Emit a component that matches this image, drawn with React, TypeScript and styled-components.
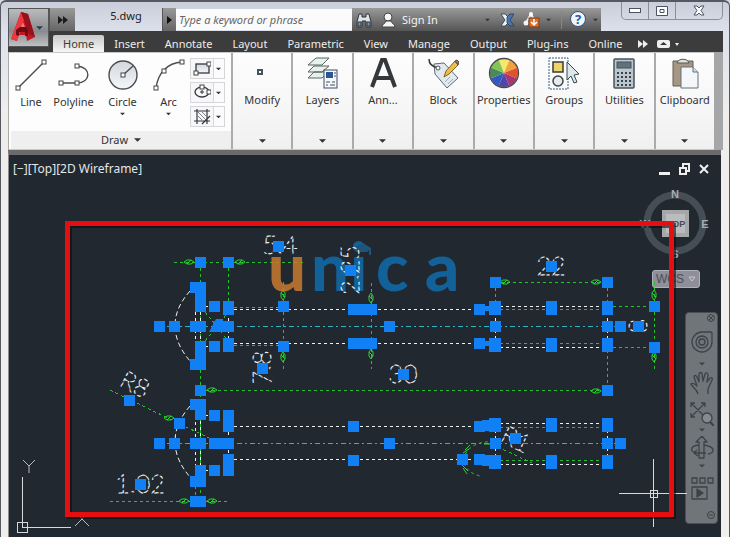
import React from "react";
import styled, { createGlobalStyle } from "styled-components";

const GlobalStyle = createGlobalStyle`
  * { box-sizing: border-box; }
  body { margin: 0; background: #d5d9e2; font-family: "Noto Sans", "Open Sans", sans-serif; }
  button { font: inherit; color: inherit; border: 0; padding: 0; margin: 0; background: none; white-space: nowrap; }
  svg { display: block; flex: none; }
`;

const Window = styled.div`
  min-height: 100vh;
  display: flex;
  flex-direction: column;
  padding: 0 6px 0 7px;
  background: linear-gradient(#c9ceda, #dde1ec 30px, #efeeed 110px, #f0efee);
  border: 1px solid #55585f;
  border-top-width: 2px;
  border-bottom: 0;
  border-radius: 6px 6px 0 0;
`;
const Header = styled.header`
  display: flex;
  background: linear-gradient(transparent 29px, #3c3c3c 29px);
`;
const AppButton = styled.button`
  width: 41px;
  height: 39px;
  margin-top: 6px;
  display: flex;
  align-items: center;
  border: 1px solid #555;
  background: linear-gradient(#b9bbbf, #888a8e 60%, #c0c1c3);
`;
const HeaderRows = styled.div`
  flex: 1;
  min-width: 0;
`;
const TitleRow = styled.div`
  display: flex;
  height: 29px;
`;
const QuickButton = styled.button<{ $w: number }>`
  width: ${(p) => p.$w}px;
  margin-top: 6px;
  display: flex;
  align-items: center;
  justify-content: center;
  background: linear-gradient(#999, #666);
  border-left: 1px solid #555;
`;
const DocName = styled.div`
  width: 87px;
  padding: 6px 0 0 15px;
  font-size: 11px;
  line-height: 16px;
  text-align: center;
  color: #222;
`;
const Search = styled.input`
  flex: 1;
  min-width: 0;
  height: 21px;
  margin-top: 7px;
  border: 0;
  padding: 0 3px;
  font: italic 11px "Noto Sans", sans-serif;
  background: #fbfbfb;
  color: #555;
  &::placeholder { color: #666; opacity: 1; }
`;
const InfoBar = styled.div`
  width: 249px;
  margin-top: 6px;
  display: flex;
  align-items: center;
  padding-left: 4px;
  background: linear-gradient(#999, #555);
  color: #f4f4f4;
  font-size: 11px;
`;
const InfoButton = styled.button<{ $ml?: number }>`
  display: flex;
  align-items: center;
  gap: 6px;
  margin-left: ${(p) => p.$ml ?? 0}px;
`;
const Divider = styled.span<{ $ml: number }>`
  width: 1px;
  height: 18px;
  margin-left: ${(p) => p.$ml}px;
  background: #858585;
`;
const WindowControls = styled.div`
  display: flex;
  width: 102px;
  height: 18px;
  margin: 0 0 0 20px;
  border: 1px solid #8a8f99;
  border-top: 0;
  border-radius: 0 0 5px 5px;
`;
const WindowButton = styled.button<{ $grow: number }>`
  flex: ${(p) => p.$grow};
  display: flex;
  align-items: center;
  justify-content: center;
  & + & { border-left: 1px solid #8a8f99; }
`;
const Tabs = styled.nav`
  display: flex;
  align-items: flex-end;
  height: 21px;
  padding-left: 4px;
  color: #ececec;
  font-size: 11px;
`;
const Tab = styled.button<{ $active?: boolean }>`
  height: 17px;
  line-height: 16px;
  padding: 0 10px;
  border-radius: 2px 2px 0 0;
  color: ${(p) => (p.$active ? "#3b3b3b" : "#ececec")};
  background: ${(p) => (p.$active ? "linear-gradient(#c9c9c9, #f6f6f6)" : "none")};
`;
const TabExtra = styled.button`
  height: 17px;
  display: flex;
  align-items: center;
  margin: 0 4px 0 5px;
`;

const Ribbon = styled.section`
  display: grid;
  grid-template-columns: 222px repeat(8, 1fr);
  height: 98px;
  padding: 1px 9px 1px 0;
  background: linear-gradient(90deg, #c6c8ca calc(100% - 9px), #a4a6a8 0);
  border-left: 1px solid #aaa;
`;
const DrawPanel = styled.div`
  display: flex;
  flex-direction: column;
  justify-content: space-between;
  background: #fdfdfd;
  padding-left: 2px;
`;
const DrawTools = styled.div`
  display: flex;
  padding-top: 5px;
`;
const DrawTool = styled.button<{ $w: number }>`
  width: ${(p) => p.$w}px;
  display: flex;
  flex-direction: column;
  align-items: center;
  font-size: 11px;
  line-height: 16px;
  color: #333;
  gap: 2px;
`;
const Minis = styled.div`
  display: flex;
  flex-direction: column;
  gap: 3px;
  margin-left: 2px;
`;
const Mini = styled.button`
  display: flex;
  align-items: center;
  width: 35px;
  height: 21px;
  border: 1px solid #d6d6da;
  background: linear-gradient(90deg, #f7f7f9 22px, #d6d6da 22px, #d6d6da 23px, #fbfbfc 23px);
  padding-left: 2px;
  gap: 5px;
`;
const DrawTitle = styled.button`
  display: flex;
  align-items: center;
  justify-content: center;
  gap: 6px;
  height: 18px;
  font-size: 11px;
  line-height: 16px;
  color: #333;
  background: #efefef;
`;
const Panel = styled.button`
  min-width: 0;
  display: flex;
  flex-direction: column;
  align-items: center;
  padding: 4px 0 6px;
  background: linear-gradient(#fdfdfe, #f6f6f7 60%, #f0f0f1);
  border-left: 2px solid #a9abad;
  color: #333;
`;
const PanelLabel = styled.span`
  font-size: 11px;
  line-height: 16px;
  margin-top: 2px;
  flex: 1;
`;

const Viewport = styled.main`
  flex: 1;
  position: relative;
  overflow: hidden;
  margin-right: 2px;
  border-top: 5px solid #6b6b6b;
  border-left: 1px solid #8c8c8c;
  background: #212830;
`;
const ViewHeader = styled.div`
  display: flex;
  justify-content: space-between;
  align-items: center;
  padding: 6px 12px 0 4px;
  color: #e4e6e8;
  font: 12px/16px "Noto Sans", sans-serif;
`;
const ViewControls = styled.div`
  display: flex;
  gap: 9px;
`;
const Compass = styled.div`
  position: absolute;
  right: 10px;
  top: 32px;
`;
const Wcs = styled.button`
  position: absolute;
  right: 21px;
  top: 115px;
  width: 48px;
  height: 18px;
  display: flex;
  align-items: center;
  justify-content: center;
  gap: 4px;
  border: 1px solid #b0b0b8;
  border-radius: 3px;
  background: #8e8f98;
  color: #4c4e56;
  font: 12px "Liberation Sans", sans-serif;
`;
const NavBar = styled.nav`
  position: absolute;
  right: 3px;
  top: 157px;
  width: 33px;
  height: 212px;
  display: flex;
  flex-direction: column;
  align-items: center;
  border: 1px solid #4a4f55;
  border-radius: 4px;
  background: #70757a;
`;
const NavButton = styled.button<{ $h: number; $end?: boolean }>`
  width: 31px;
  height: ${(p) => p.$h}px;
  display: flex;
  align-items: center;
  justify-content: ${(p) => (p.$end ? "flex-end" : "center")};
  padding-right: ${(p) => (p.$end ? 2 : 0)}px;
`;
const Drawing = styled.svg`
  position: absolute;
  left: 0;
  top: 0;
  pointer-events: none;
`;
const Spacer = styled.div`
  height: 358px;
`;

const Caret = ({ c = "#333", s = 7 }: { c?: string; s?: number }) => (
  <svg width={s} height="4" viewBox="0 0 8 4" aria-hidden="true">
    <path d="M0 0H8L4 4Z" fill={c} />
  </svg>
);
const DoubleArrow = ({ c }: { c: string }) => (
  <svg width="10" height="8" viewBox="0 0 10 8" aria-hidden="true">
    <path d="M0 0L5 4L0 8ZM5 0L10 4L5 8Z" fill={c} />
  </svg>
);

const Node = ({ x, y }: { x: number; y: number }) => (
  <rect x={x - 2} y={y - 2} width="4" height="4" fill="#fff" stroke="#444" strokeWidth="1" />
);
const DrawIcon = ({ kind }: { kind: string }) => (
  <svg width="34" height="34" viewBox="0 0 34 34" fill="none" stroke="#4a4e52" strokeWidth="1.4" aria-hidden="true">
    <defs>
      <linearGradient id="disc" x1="0" y1="0" x2="0" y2="1">
        <stop offset="0" stopColor="#d3d8df" />
        <stop offset="1" stopColor="#f4f6f8" />
      </linearGradient>
    </defs>
    {kind === "Line" && (<><path d="M4 30L30 4" /><Node x={4} y={30} /><Node x={30} y={4} /></>)}
    {kind === "Polyline" && (
      <><path d="M4 25H20C34 25 35 9 20 8" /><Node x={4} y={25} /><Node x={20} y={25} /><Node x={20} y={8} /></>
    )}
    {kind === "Circle" && (<><circle cx="17" cy="17" r="14" fill="url(#disc)" /><path d="M17 17L27 8" /><Node x={17} y={17} /></>)}
    {kind === "Arc" && (<><path d="M4 30C6 15 15 5 30 4" /><Node x={4} y={30} /><Node x={12} y={13} /><Node x={30} y={4} /></>)}
  </svg>
);
const MiniIcon = ({ kind }: { kind: string }) => (
  <svg width="18" height="17" viewBox="0 0 18 17" fill="none" stroke="#33383c" aria-hidden="true">
    {kind === "Rectangle" && (<><rect x="3" y="4" width="13" height="9" fill="url(#disc)" strokeWidth="1.3" /><Node x={3} y={13} /><Node x={16} y={4} /></>)}
    {kind === "Ellipse" && (<><ellipse cx="9" cy="8" rx="7" ry="5" strokeWidth="1.3" /><path d="M7 8H11M9 6V10" /><Node x={16} y={8} /><Node x={9} y={3} /></>)}
    {kind === "Hatch" && (
      <><path d="M4 1V16M14 1V16M1 3H17M1 13H17M9 16L17 8" strokeWidth="1.2" /><path d="M5 8L9 12M5 4L13 12M9 4L13 8" strokeWidth=".8" stroke="#666" /></>
    )}
  </svg>
);

const WHEEL = ["#f5e76b", "#f0a33c", "#e0522e", "#a3386f", "#5443a8", "#3159c4", "#4a8a58", "#82c256"];
const wedge = (i: number) => {
  const at = (k: number) => {
    const a = ((k * 45 - 112) * Math.PI) / 180;
    return `${16 + 14 * Math.cos(a)} ${16 + 14 * Math.sin(a)}`;
  };
  return `M16 16L${at(i)}A14 14 0 0 1 ${at(i + 1)}Z`;
};
const PanelIcon = ({ kind }: { kind: string }) => (
  <svg width="32" height="33" viewBox="0 0 32 33" fill="none" stroke="#45545c" aria-hidden="true">
    {kind === "Modify" && <rect x="12" y="13" width="4" height="4" strokeWidth="2" fill="#fff" />}
    {kind === "Layers" && (
      <>
        <path d="M1 21L7 15H22L15 21ZM1 15L7 9H22L15 15ZM1 8L9 1H22L15 8Z" fill="#e9efe9" stroke="#566" />
        <rect x="17" y="13" width="13" height="18" fill="#f5f8fb" stroke="#3c4d60" />
        <rect x="19" y="15" width="7" height="6" fill="#285693" stroke="none" />
        <path d="M27 16H29M27 19H29M19 25H23M25 25H28M19 28H21M23 28H28" stroke="#3c4d60" />
      </>
    )}
    {kind === "Ann..." && <path d="M5 30L15 3H18L28 30M9 21H24" stroke="#34383c" strokeWidth="4" />}
    {kind === "Block" && (
      <>
        <path d="M7 7L17 6L31 21L20 31L8 17Z" fill="#e3e8ec" stroke="#5b6972" />
        <path d="M2 2C2 8 6 10 11 11" stroke="#333" strokeWidth="1.5" />
        <circle cx="11" cy="11" r="2" fill="#fff" />
        <path d="M17 20L19 14L28 4L31 8L22 17Z" fill="#f0bd45" stroke="#7c642e" />
        <path d="M28 4L31 8L32 5L30 3Z" fill="#d15b48" />
        <path d="M18 25L23 20M21 27L26 22" stroke="#a7aeb5" />
      </>
    )}
    {kind === "Properties" && (<>{WHEEL.map((c, i) => <path key={c} d={wedge(i)} fill={c} stroke="none" />)}<circle cx="16" cy="16" r="14.5" stroke="#474747" strokeWidth="1.3" /></>)}
    {kind === "Groups" && (
      <>
        <path d="M1 1H20V32H1Z" stroke="#315d83" strokeDasharray="2 1" />
        <rect x="5" y="5" width="10" height="10" fill="#eed568" stroke="#3b3b33" strokeWidth="1.5" />
        <circle cx="10" cy="24" r="5" fill="#e6eaec" stroke="#3c4448" strokeWidth="1.5" />
        <path d="M19 5V23L23 19L26 26L29 25L26 18L31 17Z" fill="#dde8ed" stroke="#344852" />
      </>
    )}
    {kind === "Utilities" && (
      <>
        <rect x="6" y="2" width="20" height="29" rx="1" fill="#bdc5cd" strokeWidth="1.5" />
        <rect x="9" y="5" width="14" height="6" fill="#61717d" />
        {[15, 19, 23, 27].map((y) => [9, 13, 17, 21].map((x) => <rect key={`${x}-${y}`} x={x} y={y} width="2" height="2" fill="#35434d" stroke="none" />))}
      </>
    )}
    {kind === "Clipboard" && (
      <>
        <path d="M4 4H24V29H4Z" fill="#a69684" stroke="#645c54" />
        <path d="M8 6C9 1 19 1 20 6Z" fill="#e2e2df" stroke="#555" />
        <path d="M12 10H24L29 15V31H12Z" fill="#f4f6fa" stroke="#65707c" />
        <path d="M24 10V15H29" fill="#d9dfe7" stroke="#65707c" />
      </>
    )}
  </svg>
);

const Logo = () => (
  <svg width="27" height="35" viewBox="0 0 27 35" aria-hidden="true">
    <path d="M2 29L12 2L19 4L26 27L18 31L17 25H9L8 31Z" fill="#c31722" />
    <path d="M2 29L12 2L15 10L8 31Z" fill="#ee3840" />
    <path d="M12 2L19 4L26 27L20 24Z" fill="#96111b" />
    <path d="M10 22L14 12L18 22Z" fill="#f5747b" />
    <path d="M7 25V20L11 17H17L19 20V26H16V22H10V26Z" fill="#6d0a14" />
  </svg>
);

type P = [number, number, number, number];
const GREEN: P[] = [
  [174, 262, 304, 262], [200, 262, 200, 501], [228, 262, 228, 306], [234, 307, 283, 307], [234, 345, 283, 345],
  [283, 282, 283, 372], [371, 283, 371, 369], [495, 282, 607, 282], [495, 282, 495, 304], [607, 282, 607, 306],
  [500, 309, 607, 309], [500, 343, 607, 343], [607, 306, 654, 306], [607, 347, 654, 347], [607, 350, 607, 390], [654, 282, 654, 372],
  [200, 390, 607, 390], [110, 501, 228, 501], [195, 486, 195, 501],
  [500, 427, 607, 427], [500, 460, 607, 460], [205, 312, 228, 341], [205, 341, 230, 310],
  [110, 390, 209, 438], [498, 447, 532, 463],
];
const WHITE: P[] = [
  [234, 309, 495, 309], [234, 343, 495, 343], [195, 312, 195, 341], [200, 312, 200, 341], [228, 312, 228, 341],
  [205, 306, 228, 306], [205, 346, 228, 346], [500, 306, 607, 306], [500, 347, 607, 347], [495, 312, 495, 343], [607, 312, 607, 343],
  [234, 426, 490, 426], [234, 459, 490, 459], [195, 404, 195, 481], [200, 415, 200, 470], [228, 426, 228, 459],
  [205, 415, 228, 415], [205, 470, 228, 470], [500, 423, 607, 423], [500, 464, 607, 464], [495, 424, 495, 460], [607, 424, 607, 460],
];
const GRIPS: [number, number][] = [
  [200, 262], [228, 262], [278, 246], [214, 306], [283, 306], [159, 326], [174, 326], [214, 346], [283, 346], [262, 368],
  [200, 390], [350, 270], [389, 326], [403, 374], [479, 309], [495, 282], [495, 326], [479, 343], [551, 266], [607, 282],
  [607, 326], [620, 326], [638, 326], [654, 306], [654, 347], [607, 390], [129, 400], [179, 423], [214, 415], [228, 415],
  [228, 426], [159, 443], [174, 443], [228, 459], [228, 470], [214, 470], [200, 470], [140, 484], [353, 426], [389, 443],
  [353, 460], [479, 426], [487, 425], [495, 443], [462, 459], [479, 459], [487, 460], [515, 438], [607, 443], [620, 443],
];
const BLOCKS: P[] = [
  [190, 282, 16, 11], [195, 282, 11, 30], [223, 301, 11, 14], [190, 321, 16, 11], [213, 321, 21, 11], [195, 341, 11, 29],
  [190, 359, 16, 11], [223, 338, 11, 14], [348, 304, 29, 11], [348, 338, 29, 11], [489, 301, 12, 14], [489, 338, 12, 14],
  [546, 301, 11, 14], [546, 338, 11, 14], [602, 301, 11, 14], [602, 338, 11, 14], [484, 306, 6, 5], [484, 341, 6, 5],
  [190, 399, 16, 11], [195, 404, 11, 16], [190, 438, 16, 11], [209, 438, 25, 11], [190, 476, 16, 11], [195, 465, 11, 20],
  [190, 496, 16, 11], [489, 418, 12, 14], [546, 418, 11, 14], [602, 418, 11, 14], [489, 455, 12, 14], [546, 455, 11, 14], [602, 455, 11, 14],
];
const ARROWS: [number, number, boolean?][] = [
  [189, 262], [240, 262], [283, 295, true], [283, 357, true], [371, 298, true], [371, 354, true], [505, 282], [596, 282],
  [654, 295, true], [654, 357, true], [212, 390], [596, 391], [184, 501], [212, 501], [169, 418],
];
const LABELS: [string, number, number, number][] = [
  ["5.4", 280, 245, 0], ["2.25", 350, 270, -90], ["7.8", 262, 368, -90], ["30", 403, 374, 0], ["22", 551, 266, 0],
  ["8", 638, 326, -90], ["R8", 135, 384, 26], ["1.02", 140, 484, 0], ["R1", 516, 439, 26],
];

const CadDrawing = () => (
  <Drawing width="713" height="382" viewBox="9 155 713 382" fill="none" role="img" aria-label="Selected CAD drawing">
    <g stroke="#27c02f" strokeDasharray="3 3">
      {GREEN.map((l, i) => <line key={i} x1={l[0]} y1={l[1]} x2={l[2]} y2={l[3]} shapeRendering="crispEdges" />)}
      <path d="M494 442C463 439 452 469 480 476" />
    </g>
    <g stroke="#eef1f3" strokeDasharray="3 3">
      {WHITE.map((l, i) => <line key={i} x1={l[0]} y1={l[1]} x2={l[2]} y2={l[3]} shapeRendering="crispEdges" />)}
      <path d="M190 291C170 313 170 338 190 361M190 406C170 429 170 454 190 477" strokeDasharray="5 3" />
    </g>
    <path d="M159 326H620M159 443H620" stroke="#2bb5c0" strokeDasharray="5 3 2 3" shapeRendering="crispEdges" />
    <g stroke="#29d331">
      {ARROWS.map(([x, y, v], i) => (
        <path key={i} transform={`rotate(${v ? 90 : 0} ${x} ${y})`} d={`M${x - 5} ${y}L${x - 2} ${y - 2}H${x + 2}L${x + 5} ${y}L${x + 2} ${y + 2}H${x - 2}ZM${x - 2} ${y + 2}L${x + 2} ${y - 2}`} />
      ))}
      <path d="M465 450L470 445M463 453L469 449M462 465L468 471M463 468L467 474M484 444H490" />
    </g>
    <g fontFamily="Lato, sans-serif" fontWeight="900" fontSize="67" opacity=".82">
      <text x="268" y="291" fill="#cf7d2f">u</text>
      <g fill="#0f6eb0">
        <text x="311" y="291">n</text>
        <text x="350" y="291">i</text>
        <text x="376" y="291">c</text>
        <text x="425" y="291">a</text>
      </g>
      <path d="M353 248L363 243L371 248V255H369V250L367 252H357Z" fill="#1e618c" />
    </g>
    <g fontFamily="Lato, sans-serif" fontWeight="100" fontSize="25" stroke="#eef1f3" strokeWidth=".9" strokeDasharray="3 3" textAnchor="middle">
      {LABELS.map(([t, x, y, r]) => <text key={t} x={x} y={y + 9} transform={`rotate(${r} ${x} ${y})`}>{t}</text>)}
    </g>
    <g fill="#1180f5">
      <path d="M209 332L216 319H223V332Z" />
      {BLOCKS.map((b, i) => <rect key={i} x={b[0]} y={b[1]} width={b[2]} height={b[3]} />)}
      {GRIPS.map(([x, y], i) => <rect key={i} x={x - 5} y={y - 5} width="11" height="11" />)}
    </g>
    <g stroke="#d6d9dc" shapeRendering="crispEdges">
      <path d="M22 477V527H71M17 522H27V532H17ZM653 459V527M619 493H687M650 490H657V497H650Z" />
    </g>
    <path d="M23 460L29 466L35 460M29 466V473M75 526L82 519L89 526M82 519L77 513M82 519L87 513" stroke="#b9bdc1" />
    <rect x="69.5" y="225.5" width="604" height="291" stroke="#0b0d10" strokeOpacity=".6" strokeWidth="5" />
    <rect x="67.5" y="223.5" width="604" height="291" stroke="#e50f12" strokeWidth="5" />
  </Drawing>
);

const NavIcon = ({ kind }: { kind: string }) => (
  <svg width="24" height="24" viewBox="0 0 24 24" fill="none" stroke="#3d4247" strokeWidth="1.3" strokeLinejoin="round" aria-hidden="true">
    {kind === "Wheel" && (<><path d="M3 2H12A10 10 0 1 1 2 12V3Z" transform="rotate(90 12 12)" /><circle cx="12" cy="12" r="6" /><circle cx="12" cy="12" r="3" /></>)}
    {kind === "Pan" && <path d="M8 23C7 18 2 16 1 13C3 11 5 13 7 15L4 6C4 4 6 4 7 6L9 11L9 3C9 1 12 1 12 3L13 10L15 3C16 1 18 2 18 4L17 11L20 7C22 6 23 8 22 9L18 18L18 23" />}
    {kind === "Zoom" && (<><path d="M1 1L15 15M1 15L15 1M1 5V1H5M11 1H15V5M1 11V15H5" /><circle cx="17" cy="16" r="5" fill="#858a8f" /><path d="M20 20L24 24" strokeWidth="2" /></>)}
    {kind === "Orbit" && <path d="M9 22V6H6L12 0L17 6H14V22ZM9 9C-1 10 0 16 7 17H16M14 9C26 11 25 17 18 18M7 14L4 17L8 20" />}
    {kind === "Motion" && (<><path d="M2 1H7V6H2ZM10 1H15V6H10ZM18 1H23V6H18ZM2 10H17V22H2Z" /><path d="M7 12V20L13 16Z" fill="#3d4247" /></>)}
  </svg>
);

const PANELS = ["Modify", "Layers", "Ann...", "Block", "Properties", "Groups", "Utilities", "Clipboard"];
const TABS = ["Home", "Insert", "Annotate", "Layout", "Parametric", "View", "Manage", "Output", "Plug-ins", "Online"];
const TOOLS: [string, number][] = [["Line", 40], ["Polyline", 45], ["Circle", 53], ["Arc", 39]];

export default function App() {
  return (
    <Window>
      <GlobalStyle />
      <Header>
        <AppButton aria-label="Application menu"><Logo /><Caret c="#2b3e50" /></AppButton>
        <HeaderRows>
          <TitleRow>
            <QuickButton $w={26} aria-label="More quick access"><DoubleArrow c="#1b1b1b" /></QuickButton>
            <DocName>5.dwg</DocName>
            <QuickButton $w={14} aria-label="Expand search">
              <svg width="5" height="8"><path d="M0 0L5 4L0 8Z" fill="#111" /></svg>
            </QuickButton>
            <Search aria-label="Search" placeholder="Type a keyword or phrase" />
            <InfoBar>
              <InfoButton aria-label="Search help">
                <svg width="16" height="16" viewBox="0 0 16 16" stroke="#28323c" fill="#dfe4e8">
                  <path d="M3 2H6V5H10V2H13L15 10V15H10V9H6V15H1V10Z" /><path d="M2 10H5V14H2ZM11 10H14V14H11Z" fill="#8b98a5" />
                </svg>
              </InfoButton>
              <InfoButton $ml={9}>
                <svg width="15" height="16" viewBox="0 0 15 16" fill="#f3f5f7" stroke="#444"><circle cx="7" cy="5" r="4" /><path d="M1 15C1 12 5 11 5 9H10C10 11 14 12 14 15Z" /></svg>
                Sign In
              </InfoButton>
              <InfoButton $ml={47} aria-label="Account menu"><Caret s={5} /></InfoButton>
              <InfoButton $ml={10} aria-label="Exchange">
                <svg width="15" height="14" viewBox="0 0 15 14" stroke="#263b56" strokeWidth=".8"><path d="M1 1H5L8 4V10L5 13H1L5 7Z" fill="#f0f4f9" /><path d="M14 1H10L7 4V10L10 13H14L10 7Z" fill="#4977b5" /></svg>
              </InfoButton>
              <InfoButton $ml={8} aria-label="Connect">
                <svg width="17" height="17" viewBox="0 0 17 17"><path d="M3 12L8 3L11 9" fill="none" stroke="#e8eef5" strokeWidth="2" /><circle cx="8" cy="3" r="2" fill="#fff" /><circle cx="3" cy="12" r="2.5" fill="#f2f5f9" /><rect x="6" y="7" width="10" height="9" fill="#e36f22" stroke="#80401b" /><path d="M11 8V14M8 11L11 14L14 11" stroke="#fff" fill="none" strokeWidth="1.5" /></svg>
                <Caret s={5} />
              </InfoButton>
              <Divider $ml={10} />
              <InfoButton $ml={8}>
                <svg width="17" height="17" viewBox="0 0 17 17"><circle cx="8" cy="8" r="7.5" fill="#f0f4fa" stroke="#31547f" /><text x="8" y="13" textAnchor="middle" fontSize="13" fontWeight="700" fill="#285897">?</text></svg>
                <Caret s={5} />
              </InfoButton>
            </InfoBar>
            <WindowControls>
              <WindowButton $grow={27} aria-label="Minimize"><svg width="12" height="6"><rect x=".5" y=".5" width="11" height="4" fill="#fff" stroke="#4c5262" /></svg></WindowButton>
              <WindowButton $grow={26} aria-label="Restore"><svg width="12" height="10"><path d="M.5.5H11.5V9.5H.5ZM4 3.5H8V6.5H4Z" fill="#fff" stroke="#4c5262" /></svg></WindowButton>
              <WindowButton $grow={47} aria-label="Close"><svg width="12" height="11" viewBox="0 0 12 11"><path d="M1 1H4L6 3L8 1H11L8 5.5L11 10H8L6 8L4 10H1L4 5.5Z" fill="#fff" stroke="#4c5262" /></svg></WindowButton>
            </WindowControls>
          </TitleRow>
          <Tabs>
            {TABS.map((t) => <Tab key={t} $active={t === "Home"}>{t}</Tab>)}
            <TabExtra aria-label="More tabs"><DoubleArrow c="#eee" /></TabExtra>
            <TabExtra aria-label="Minimize ribbon">
              <svg width="22" height="8"><rect width="13" height="8" rx="2" fill="#eee" /><path d="M3 5L6.500 2L10 5Z" fill="#333" /><path d="M18 3H22L20 6Z" fill="#eee" /></svg>
            </TabExtra>
          </Tabs>
        </HeaderRows>
      </Header>
      <Ribbon>
        <DrawPanel>
          <DrawTools>
            {TOOLS.map(([t, w]) => (
              <DrawTool key={t} $w={w}><DrawIcon kind={t} />{t}{w !== 40 && t !== "Polyline" && <Caret s={5} />}</DrawTool>
            ))}
            <Minis>
              {["Rectangle", "Ellipse", "Hatch"].map((k) => <Mini key={k} aria-label={k}><MiniIcon kind={k} /><Caret s={5} /></Mini>)}
            </Minis>
          </DrawTools>
          <DrawTitle>Draw <Caret /></DrawTitle>
        </DrawPanel>
        {PANELS.map((p) => <Panel key={p}><PanelIcon kind={p} /><PanelLabel>{p}</PanelLabel><Caret /></Panel>)}
      </Ribbon>
      <Viewport>
        <ViewHeader>
          <div><button>[−]</button><button>[Top]</button><button>[2D Wireframe]</button></div>
          <ViewControls>
            <button aria-label="Minimize view"><svg width="11" height="12"><rect y="9" width="11" height="3" fill="#f0f0f0" /></svg></button>
            <button aria-label="Restore view"><svg width="11" height="12" fill="none" stroke="#eee" strokeWidth="2"><path d="M4 4V1H10V8H8M1 5H7V11H1Z" /></svg></button>
            <button aria-label="Close view"><svg width="10" height="12" stroke="#f0f0f0" strokeWidth="2"><path d="M1 2L9 10M9 2L1 10" /></svg></button>
          </ViewControls>
        </ViewHeader>
        <Spacer />
        <Compass>
          <svg width="72" height="74" viewBox="0 0 72 74">
            <circle cx="36" cy="36" r="28" fill="none" stroke="#454d55" strokeWidth="7" />
            <rect x="23" y="23" width="27" height="27" fill="#a5a8a9" />
            <rect x="27" y="27" width="19" height="19" fill="#babcbd" />
            <g fontFamily="Liberation Sans, sans-serif" fontWeight="700" textAnchor="middle" fill="#a6acb2" fontSize="11">
              <text x="36" y="11">N</text><text x="66" y="41">E</text><text x="36" y="71">S</text><text x="6" y="41">W</text>
              <text x="37" y="40" fontSize="9" fill="#474c52">TOP</text>
            </g>
          </svg>
        </Compass>
        <Wcs>WCS <svg width="8" height="6" fill="none" stroke="#c6c8ce"><path d="M1 1H7L4 5Z" /></svg></Wcs>
        <NavBar>
          <NavButton $h={9} $end aria-label="Close navigation"><svg width="8" height="8" fill="none" stroke="#3d4247"><circle cx="4" cy="4" r="3.500" /><path d="M2 2L6 6M6 2L2 6" /></svg></NavButton>
          <NavButton $h={40} aria-label="Wheel"><NavIcon kind="Wheel" /></NavButton>
          <Caret s={6} c="#3d4247" />
          <NavButton $h={34} aria-label="Pan"><NavIcon kind="Pan" /></NavButton>
          <NavButton $h={28} aria-label="Zoom"><NavIcon kind="Zoom" /></NavButton>
          <Caret s={6} c="#3d4247" />
          <NavButton $h={32} aria-label="Orbit"><NavIcon kind="Orbit" /></NavButton>
          <Caret s={6} c="#3d4247" />
          <NavButton $h={42} aria-label="Show motion"><NavIcon kind="Motion" /></NavButton>
          <NavButton $h={9} $end aria-label="Navigation options"><svg width="8" height="8" fill="none" stroke="#3d4247"><circle cx="4" cy="4" r="3.500" /><path d="M2 4H6" /></svg></NavButton>
        </NavBar>
        <CadDrawing />
      </Viewport>
    </Window>
  );
}
